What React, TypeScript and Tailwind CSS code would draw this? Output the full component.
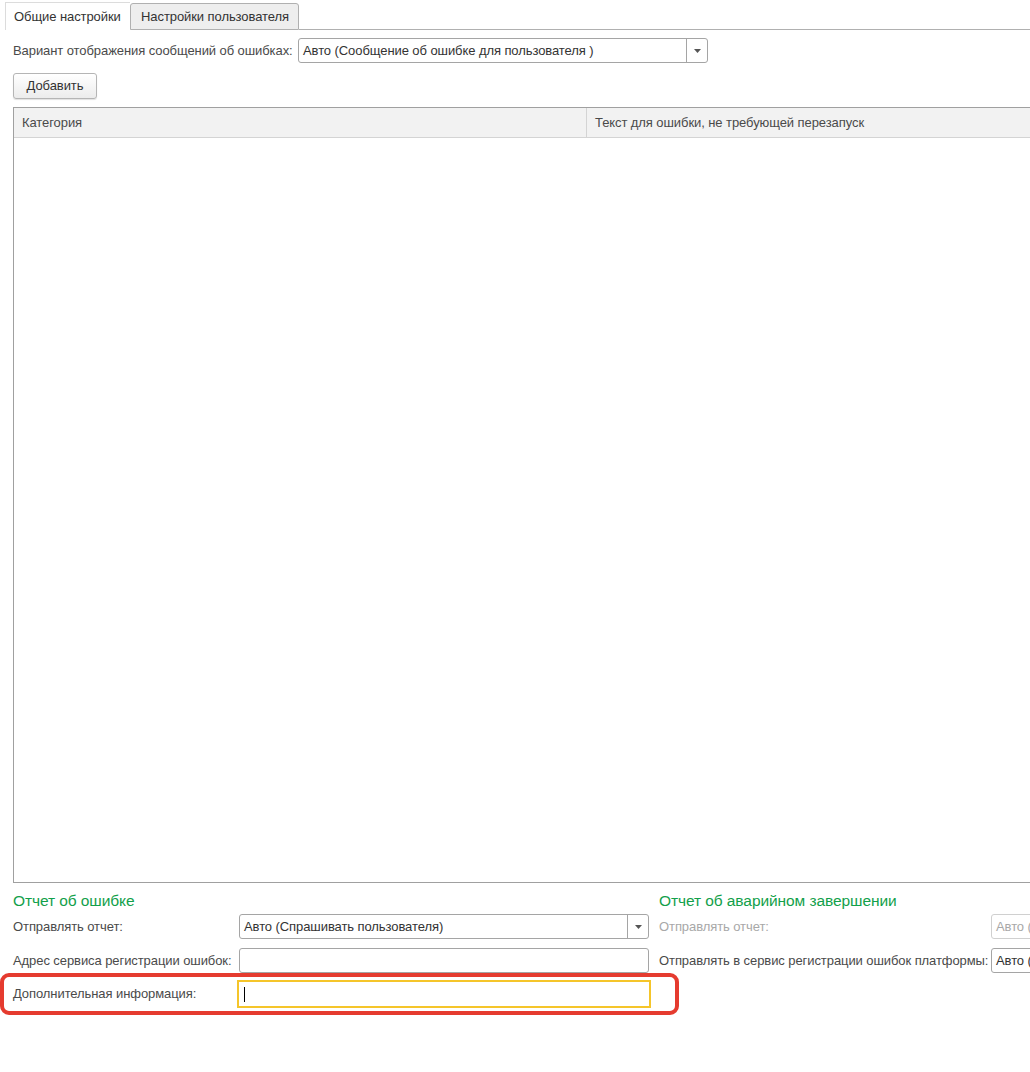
import React from "react";

function Arrow() {
  return (
    <svg width="7" height="4" viewBox="0 0 7 4">
      <path d="M0 0h7L3.5 4z" fill="#555" />
    </svg>
  );
}

function ComboBox({ value, width }: { value: string; width: string }) {
  return (
    <div
      className={`${width} flex h-[25px] items-center rounded-[3px] border border-[#a5a5a5] bg-white`}
    >
      <div className="flex-1 truncate pl-[4px] text-[#333]">{value}</div>
      <div className="flex h-full w-[21px] items-center justify-center border-l border-[#a5a5a5]">
        <Arrow />
      </div>
    </div>
  );
}

export default function App() {
  return (
    <div className="h-[1072px] w-[1030px] overflow-hidden bg-white font-['Liberation_Sans',Arial,sans-serif] text-[13px] tracking-[-0.08px] text-[#4a4a4a]">
      {/* tabs */}
      <div className="flex h-[30px] items-end">
        <div className="w-[5px]" />
        <div className="flex h-[28px] w-[125px] items-center border-l border-t border-[#dcdcdc] bg-white pl-[8px] text-[#333]">
          Общие настройки
        </div>
        <div className="flex h-[27px] w-[169px] items-center rounded-t-[3px] border border-[#b0b0b0] bg-[#eeeeee] pl-[10px] text-[#333]">
          Настройки пользователя
        </div>
        <div className="h-full flex-1 border-b border-[#b0b0b0]" />
      </div>

      <div className="px-[13px]">
        <div className="flex items-center pt-[8px]">
          <div className="w-[285px] whitespace-nowrap">
            Вариант отображения сообщений об ошибках:
          </div>
          <ComboBox value="Авто (Сообщение об ошибке для пользователя )" width="w-[410px]" />
        </div>

        <button className="mt-[10px] flex h-[26px] w-[84px] items-center justify-center rounded-[3px] border border-[#b5b5b5] bg-gradient-to-b from-white to-[#ececec] text-[#333] shadow-[0_1px_1px_rgba(0,0,0,0.12)]">
          Добавить
        </button>

        {/* table */}
        <div className="mt-[8px] flex h-[776px] w-[1030px] flex-col border-b border-l border-t border-[#a0a0a0]">
          <div className="flex h-[30px] border-b border-[#d4d4d4] bg-[#f2f2f2]">
            <div className="flex w-[573px] items-center border-r border-[#d4d4d4] pl-[8px]">
              Категория
            </div>
            <div className="flex items-center pl-[8px]">
              Текст для ошибки, не требующей перезапуск
            </div>
          </div>
          <div className="flex-1 bg-white" />
        </div>

        {/* bottom */}
        <div className="flex">
          <div className="w-[646px] shrink-0">
            <div className="mt-[8px] flex h-[20px] items-center text-[15.5px] text-[#12a04a]">
              Отчет об ошибке
            </div>
            <div className="mt-[3px] flex items-center">
              <div className="w-[226px] whitespace-nowrap">Отправлять отчет:</div>
              <ComboBox value="Авто (Спрашивать пользователя)" width="w-[410px]" />
            </div>
            <div className="mt-[9px] flex items-center">
              <div className="w-[226px] whitespace-nowrap">
                Адрес сервиса регистрации ошибок:
              </div>
              <div className="h-[25px] w-[410px] rounded-[3px] border border-[#a5a5a5] bg-white" />
            </div>
          </div>
          <div className="shrink-0">
            <div className="mt-[8px] flex h-[20px] items-center whitespace-nowrap text-[15.5px] text-[#12a04a]">
              Отчет об аварийном завершении
            </div>
            <div className="mt-[3px] flex items-center">
              <div className="w-[332px] whitespace-nowrap text-[#a8a8a8]">
                Отправлять отчет:
              </div>
              <div className="flex h-[25px] w-[120px] items-center rounded-[3px] border border-[#d0d0d0] bg-white pl-[4px] whitespace-nowrap text-[#a8a8a8]">
                Авто (Спрашивать пользователя)
              </div>
            </div>
            <div className="mt-[9px] flex items-center">
              <div className="w-[332px] whitespace-nowrap">
                Отправлять в сервис регистрации ошибок платформы:
              </div>
              <div className="flex h-[25px] w-[120px] items-center rounded-[3px] border border-[#a5a5a5] bg-white pl-[4px] whitespace-nowrap text-[#333]">
                Авто (Отправлять)
              </div>
            </div>
          </div>
        </div>

        {/* highlighted row */}
        <div className="-ml-[13px] flex h-[42px] w-[679px] items-center rounded-[9px] border-4 border-[#e53b2f] pl-[9px]">
          <div className="w-[224px] whitespace-nowrap">Дополнительная информация:</div>
          <div className="flex h-[28px] w-[414px] items-center border-2 border-[#f5c52a] bg-white pl-[5px]">
            <span className="h-[15px] w-px bg-black" />
          </div>
        </div>
      </div>
    </div>
  );
}
